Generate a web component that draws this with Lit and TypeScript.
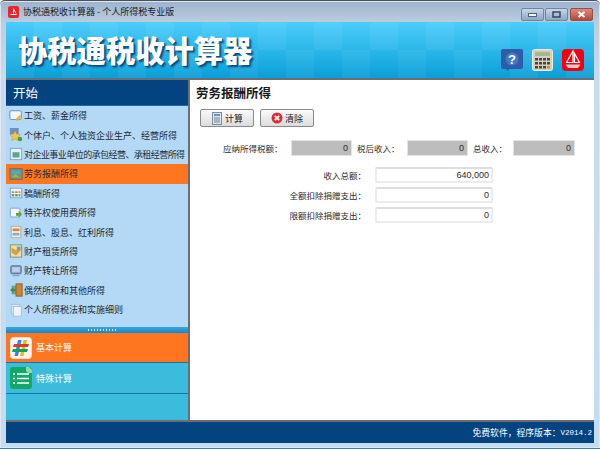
import { LitElement, html, css, svg } from "lit";
import { customElement } from "lit/decorators.js";

const itemIcons = [
  svg`<rect x="1" y="2" width="13" height="10" rx="1.5" fill="#f4f8fd" stroke="#5f88bb"/><path d="M7 12l5-5 2 1-4 6z" fill="#e8b030"/>`,
  svg`<rect x="1" y="0" width="10" height="7" fill="#6d8fc2"/><path d="M7 3l2 4 4 .5-3 3 1 4-4-2-4 2 1-4-3-3 4-.5z" fill="#f0c840" stroke="#b89020" stroke-width=".5"/><circle cx="12.5" cy="12.5" r="2.5" fill="#4a9a40"/>`,
  svg`<rect x="1.5" y="1.5" width="13" height="13" fill="#e4effa" stroke="#7f9fc8"/><rect x="4" y="6" width="8" height="6" fill="#5aa590"/>`,
  svg`<rect x="1" y="2" width="14" height="12" fill="#7d8f80" stroke="#5f6a5c"/><rect x="3" y="4" width="10" height="4" fill="#4aa8d8"/><path d="M3 12l4-4 6 4z" fill="#8cc040"/>`,
  svg`<rect x="1.5" y="2.5" width="13" height="11" fill="#eef4fb" stroke="#7f9fc8"/><path d="M3 6h3v2H3zM7 6h3v2H7zM11 6h2v2h-2z" fill="#d08a40"/><path d="M3 9h3v3H3zM7 9h3v3H7zM11 9h2v3h-2z" fill="#60a860"/>`,
  svg`<rect x="1.5" y="2.5" width="11" height="10" rx="1" fill="#f4f8fd" stroke="#7f9fc8"/><path d="M8 8h3V5.5l4 4-4 4V11H8z" fill="#58a838"/>`,
  svg`<rect x="2.5" y="1.5" width="11" height="13" fill="#f6efe0" stroke="#b0a890"/><rect x="4" y="4" width="8" height="3" fill="#e08050"/><path d="M4 9h8v3H4z" fill="#7fb0d8"/>`,
  svg`<rect x="1.5" y="1" width="13" height="14" fill="#e8e0b0" stroke="#8a8a60"/><path d="M3 4l5 3 5-4v5l-5 5-5-3z" fill="#d8a040"/><path d="M9 3h4v4H9z" fill="#60a0d0"/>`,
  svg`<rect x="2" y="2" width="12" height="9" rx="1" fill="#7f96b8" stroke="#5f7090"/><rect x="3.5" y="3.5" width="9" height="6" fill="#b8cde8"/><rect x="4" y="12" width="8" height="2" fill="#8f9fb8"/>`,
  svg`<rect x="8" y="1" width="7" height="14" fill="#c88838" stroke="#8a5820"/><path d="M1 8l4-3v2h3v2H5v2z" fill="#3d9a40"/><rect x="3" y="3" width="5" height="10" fill="#4f7a50" opacity=".6"/>`,
  svg`<rect x="3" y="1.5" width="9" height="11" fill="#dde8f5" stroke="#a8bcd8"/><rect x="5" y="4" width="9" height="11" fill="#eef4fb" stroke="#a8bcd8"/>`,
];

const items = [
  "工资、薪金所得",
  "个体户、个人独资企业生产、经营所得",
  "对企业事业单位的承包经营、承租经营所得",
  "劳务报酬所得",
  "稿酬所得",
  "特许权使用费所得",
  "利息、股息、红利所得",
  "财产租赁所得",
  "财产转让所得",
  "偶然所得和其他所得",
  "个人所得税法和实施细则",
];

@customElement("app-root")
export class AppRoot extends LitElement {
  static styles = css`
    :host {
      display: block;
      width: 600px;
      height: 449px;
      overflow: hidden;
      font-family: "Noto Sans CJK SC", "Liberation Sans", sans-serif;
    }
    .win {
      box-sizing: border-box;
      width: 600px;
      height: 449px;
      display: flex;
      flex-direction: column;
      background: linear-gradient(#9db3cd 0, #bccde0 22px, #c9dbee 80px, #c4dcf2 100%);
      border-top: 1px solid #4a4f55;
      border-bottom: 1px solid #2f8c9c;
      border-radius: 5px 5px 0 0;
      box-shadow: inset 0 0 0 1px #dfe8f2;
    }
    .title {
      height: 21px;
      flex: none;
      display: flex;
      align-items: center;
      padding: 0 7px 0 8px;
      gap: 4px;
      font-size: 9px;
      color: #1c1c1c;
    }
    .title .txt { flex: 1; }
    .app-ico { width: 11px; height: 12px; }
    .wbtns { display: flex; gap: 1px; align-items: center; margin-top: 6px; }
    .wbtn {
      width: 23px;
      height: 13px;
      border: 1px solid #6e86a4;
      border-radius: 2px;
      box-sizing: border-box;
      background: linear-gradient(#c9d7e8, #8ea6c4);
      display: grid;
      place-items: center;
    }
    .wbtn.close { background: linear-gradient(#de8a7c, #b5483c); border-color: #8e5048; margin-left: 1px; }
    .inner { flex: 1; min-height: 0; margin: 0 6px 5px; display: flex; flex-direction: column; }
    .banner {
      height: 56px;
      flex: none;
      border-bottom: 2px solid #6b6f73;
      display: flex;
      align-items: center;
      padding: 0 10px 0 12px;
      background:
        repeating-conic-gradient(rgba(255,255,255,.05) 0 25%, transparent 0 50%) 0 0 / 56px 56px,
        linear-gradient(#4dcdfb, #0a9fd8);
    }
    .logo {
      flex: 1;
      font-size: 29.3px;
      font-weight: 900;
      line-height: 32px;
      color: #fff;
      margin-bottom: 2px;
      text-shadow: 2px 2px 2px #0a4f80, 1px 1px 0 #0a4f80;
    }
    .tools { display: flex; gap: 9px; align-items: center; margin-top: 19px; }
    .tools svg { display: block; }
    .main { flex: 1; min-height: 0; display: flex; }
    .side {
      width: 182px;
      flex: none;
      border-right: 2px solid #6b6f73;
      display: flex;
      flex-direction: column;
      background: #b3d9f6;
    }
    .side-h {
      height: 26px;
      flex: none;
      box-sizing: border-box;
      background: #03437f;
      border-bottom: 1px solid #1a6aa5;
      color: #fff;
      font-size: 12.5px;
      display: flex;
      align-items: center;
      padding-left: 7px;
    }
    .list { flex: none; height: 221px; display: grid; grid-auto-rows: 19.4px; }
    .item {
      display: flex;
      align-items: center;
      gap: 1px;
      padding-left: 3px;
      font-size: 9px;
      color: #1e2a33;
      white-space: nowrap;
    }
    .item svg { width: 14px; height: 14px; flex: none; }
    .item.on { background: #ff7620; }
    .item.tight { letter-spacing: -0.55px; }
    .split {
      height: 6px;
      flex: none;
      background: linear-gradient(#3aa6de, #1487c9);
      display: flex;
      align-items: center;
      justify-content: center;
    }
    .dots { width: 28px; height: 2px; background: repeating-linear-gradient(90deg, #d5e6f4 0 1.5px, transparent 1.5px 3px); margin-left: 10px; }
    .acc { flex: none; height: 29px; display: flex; align-items: center; gap: 4px; padding-left: 4px; font-size: 9px; color: #fff; border-bottom: 1px solid #1f6fa8; background: #3bbcdd; }
    .acc.on { background: #ff7620; }
    .acc.two { height: 30px; }
    .acc svg { width: 22px; height: 22px; flex: none; }
    .acc-rest { flex: 1; background: #3bbcdd; }
    .content { flex: 1; background: #fff; min-width: 0; padding: 5px 0 0 6px; color: #2c2c2c; }
    h1 { margin: 0; font-size: 12.5px; font-weight: 700; line-height: 16px; color: #1a1a1a; }
    .btns { display: flex; gap: 6px; margin: 8px 0 0 4px; }
    button {
      width: 54px;
      height: 18px;
      padding: 0;
      box-sizing: border-box;
      border: 1px solid #8a8a8a;
      border-radius: 2px;
      background: linear-gradient(#fafafa, #dcdcdc);
      display: flex;
      align-items: center;
      justify-content: center;
      gap: 2px;
      font-family: inherit;
      font-size: 9px;
      color: #222;
    }
    .stats {
      display: grid;
      grid-template-columns: 68px 61px 55px 61px 45px 62px;
      align-items: center;
      margin: 12px 0 0 27px;
      height: 17px;
      font-size: 8.5px;
    }
    .stats .lab { padding-left: 5px; white-space: nowrap; }
    .stats .lab.first { padding-left: 0; }
    .box { font-family: "Liberation Sans", sans-serif; font-size: 9px; text-align: right; box-sizing: border-box; }
    .stats .box {
      background: #bdbdbd;
      border: 1px solid #e4e4e4;
      height: 16px;
      line-height: 14px;
      padding-right: 3px;
    }
    .form { display: grid; grid-template-columns: 170px 118px; row-gap: 4px; column-gap: 9px; margin-top: 11px; font-size: 8.5px; }
    .f { display: contents; }
    .f label { text-align: right; line-height: 16px; }
    .f .box {
      background: #fff;
      border: 2px solid #ececec;
      border-top-color: #dedede;
      border-radius: 2px;
      height: 16px;
      line-height: 12px;
      padding-right: 2px;
    }
    .foot {
      height: 21px;
      flex: none;
      border-top: 2px solid #6b6f73;
      background: #03437f;
      color: #fff;
      font-size: 8.8px;
      display: flex;
      align-items: center;
      justify-content: flex-end;
      padding-right: 2px;
    }
    .foot span { font-family: "Liberation Mono", monospace; font-size: 7.5px; }
  `;

  render() {
    return html`
      <div class="win">
        <div class="title">
          <svg class="app-ico" viewBox="0 0 11 12"><rect width="11" height="12" rx="2" fill="#e8262a"/><path d="M2.5 8.5h6M5.5 2.5v5M5.5 3l2.5 4.5" stroke="#fff" fill="none" stroke-width="1"/></svg>
          <span class="txt">协税通税收计算器 - 个人所得税专业版</span>
          <div class="wbtns">
            <div class="wbtn"><svg width="9" height="4"><rect x="0.5" y="0.5" width="8" height="3" fill="#f2f5f9" stroke="#4e627c"/></svg></div>
            <div class="wbtn"><svg width="9" height="7"><rect x="1" y="1" width="7" height="5" fill="none" stroke="#38485e" stroke-width="1.5"/></svg></div>
            <div class="wbtn close"><svg width="9" height="7"><path d="M1.5 1l6 5M7.5 1l-6 5" stroke="#fff" stroke-width="2"/></svg></div>
          </div>
        </div>
        <div class="inner">
          <div class="banner">
            <div class="logo">协税通税收计算器</div>
            <div class="tools">
              <svg width="22" height="22" viewBox="0 0 22 22"><rect width="22" height="20" rx="2" fill="#2f5ca8"/><path d="M5 19l1 3 4-3z" fill="#2f5ca8"/><circle cx="11" cy="10" r="6.5" fill="#4478c4"/><text x="11" y="14.5" text-anchor="middle" font-family="Liberation Sans" font-size="13" font-weight="700" fill="#fff">?</text></svg>
              <svg width="21" height="22" viewBox="0 0 21 22"><rect x=".5" y=".5" width="20" height="21" rx="2" fill="#d4d0bc" stroke="#eeeadc"/><rect x="3" y="3" width="15" height="4" fill="#a9b791"/><g fill="#4a463e"><rect x="3" y="9" width="3" height="2.5"/><rect x="7" y="9" width="3" height="2.5"/><rect x="11" y="9" width="3" height="2.5"/><rect x="15" y="9" width="3" height="2.5"/><rect x="3" y="13" width="3" height="2.5"/><rect x="7" y="13" width="3" height="2.5"/><rect x="11" y="13" width="3" height="2.5"/><rect x="15" y="13" width="3" height="2.5"/><rect x="3" y="17" width="3" height="2.5"/><rect x="7" y="17" width="3" height="2.5"/><rect x="11" y="17" width="3" height="2.5"/></g><rect x="15" y="17" width="3" height="2.5" fill="#e08a30"/></svg>
              <svg width="22" height="22" viewBox="0 0 22 22"><rect width="22" height="22" rx="4" fill="#f00010"/><path d="M11 2L4.5 13.5H11zM12.5 4.5l5 9h-5z" fill="none" stroke="#fff" stroke-width="1.2"/><path d="M3.5 15.5h15L16 19H6z" fill="#ffc8c8"/></svg>
            </div>
          </div>
          <div class="main">
            <div class="side">
              <div class="side-h">开始</div>
              <div class="list">
                ${items.map(
                  (t, i) => html`<div class="item ${i === 3 ? "on" : ""} ${i === 2 ? "tight" : ""}">
                    <svg viewBox="0 0 16 16">${itemIcons[i]}</svg><span>${t}</span>
                  </div>`
                )}
              </div>
              <div class="split"><div class="dots"></div></div>
              <div class="acc on">
                <svg viewBox="0 0 22 22"><rect x=".5" y=".5" width="21" height="21" rx="3" fill="#f7f3ee" stroke="#ddd"/><path d="M8 3h3.5L8 19H4.5z" fill="#3f7fe0"/><path d="M13.5 3H17l-3.5 16H10z" fill="#f0b820"/><path d="M4 7h15l-1 3H3z" fill="#d0403a"/><path d="M3 12h15l-1 3H2z" fill="#18a058"/></svg>
                基本计算
              </div>
              <div class="acc two">
                <svg viewBox="0 0 22 22"><rect width="22" height="22" rx="3" fill="#13a868"/><path d="M16 0h3l3 3v3h-4l-2-2z" fill="#8fd8a8"/><path d="M3 7h2M7 7h12M3 11.5h2M7 11.5h12M3 16h2M7 16h12" stroke="#fff" stroke-width="1.6"/></svg>
                特殊计算
              </div>
              <div class="acc-rest"></div>
            </div>
            <div class="content">
              <h1>劳务报酬所得</h1>
              <div class="btns">
                <button><svg width="12" height="13" viewBox="0 0 12 13"><rect x="1.5" y=".5" width="9" height="12" fill="#dfe5ec" stroke="#7a8ca0"/><rect x="3" y="2" width="6" height="2" fill="#6f8fb5"/><path d="M3 6h6M3 8h6M3 10h6" stroke="#77808a"/></svg>计算</button>
                <button><svg width="12" height="12" viewBox="0 0 12 12"><circle cx="6" cy="6" r="5.5" fill="#e22a36"/><path d="M3.8 3.8l4.4 4.4M8.2 3.8l-4.4 4.4" stroke="#fff" stroke-width="1.8"/></svg>清除</button>
              </div>
              <div class="stats">
                <span class="lab first">应纳所得税额：</span>
                <div class="box">0</div>
                <span class="lab">税后收入：</span>
                <div class="box">0</div>
                <span class="lab">总收入：</span>
                <div class="box">0</div>
              </div>
              <div class="form">
                <div class="f"><label>收入总额：</label><div class="box">640,000</div></div>
                <div class="f"><label>全额扣除捐赠支出：</label><div class="box">0</div></div>
                <div class="f"><label>限额扣除捐赠支出：</label><div class="box">0</div></div>
              </div>
            </div>
          </div>
          <div class="foot">免费软件，程序版本：<span>V2014.2</span></div>
        </div>
      </div>
    `;
  }
}
